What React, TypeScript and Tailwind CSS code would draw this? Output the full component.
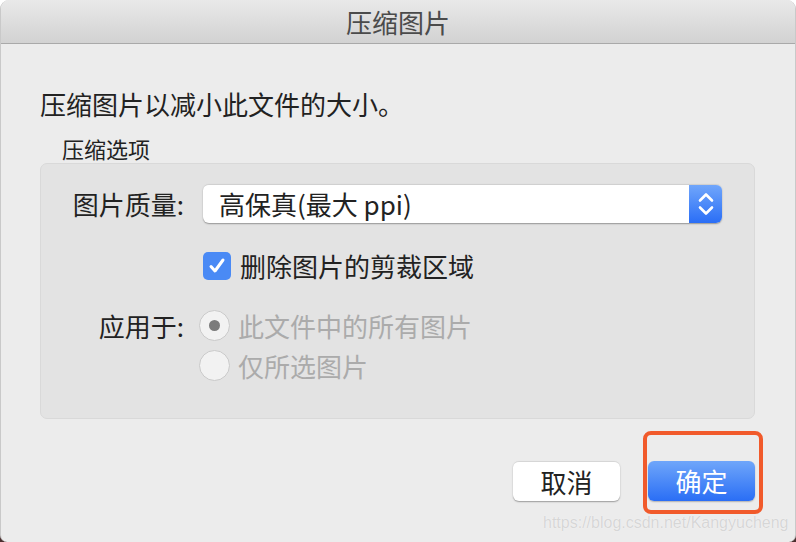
import React from 'react';

const font = "font-['Noto_Sans_CJK_SC','PingFang_SC',sans-serif]";

const Chevrons: React.FC = () => (
    <svg width="16" height="24" viewBox="0 0 16 24" fill="none" stroke="white" strokeWidth="2.6" strokeLinecap="round" strokeLinejoin="round">
        <path d="M2 8.5 L8 2.5 L14 8.5" />
        <path d="M2 15.5 L8 21.5 L14 15.5" />
    </svg>
);

const Radio: React.FC<{ checked?: boolean; label: string }> = ({ checked, label }) => (
    <div className="flex h-[31px] items-center">
        <div className="flex h-[31px] w-[31px] items-center justify-center rounded-full border border-[#cacaca] bg-[#f2f2f2]">
            {checked && <div className="h-[11px] w-[11px] rounded-full bg-[#7b7b7b]" />}
        </div>
        <span className="ml-[8px] text-[26px] leading-[31px] text-[#ababab]">{label}</span>
    </div>
);

const App: React.FC = () => {
    return (
        <div className={`relative h-[542px] w-[796px] overflow-hidden bg-[linear-gradient(to_bottom,#ffffff_50%,#4a2f2f_50%)] ${font}`}>
            <div className="flex h-full w-full flex-col overflow-hidden rounded-t-[9px] rounded-b-[7px] border-x border-[#c9c9c9] bg-[#ececec]">
                {/* title bar */}
                <div className="flex h-[44px] shrink-0 items-center justify-center border-b border-[#a9a9a9] bg-[linear-gradient(to_bottom,#e9e9e9,#d2d2d2)]">
                    <span className="text-[26px] leading-[30px] text-[#4b4b4b]">压缩图片</span>
                </div>

                <div className="flex flex-col pl-[39px] pr-[40px] pt-[42px]">
                    <p className="h-[36px] text-[26px] leading-[36px] text-[#222]">压缩图片以减小此文件的大小。</p>
                    <p className="ml-[22px] mt-[12px] h-[28px] text-[22px] leading-[28px] text-[#222]">压缩选项</p>

                    {/* options box */}
                    <div className="mt-[1px] flex h-[256px] flex-col rounded-[7px] border border-[#d9d9d9] bg-[#e3e3e3] pr-[32px] pt-[20px]">
                        <div className="grid grid-cols-[143px_1fr] items-center gap-x-[19px]">
                            <span className="text-right text-[26px] leading-[39px] text-[#222]">图片质量:</span>
                            <div className="flex h-[39px] overflow-hidden rounded-[6px] border-t border-[#d0d0d0] bg-white shadow-[0_1px_1.5px_rgba(0,0,0,0.35)]">
                                <span className="flex-1 pl-[16px] text-[26px] leading-[37px] text-[#222]">高保真(最大 ppi)</span>
                                <div className="flex w-[33px] items-center justify-center bg-[linear-gradient(to_bottom,#70a6fb,#2a6ef6)]">
                                    <Chevrons />
                                </div>
                            </div>

                            <div />
                            <div className="mt-[29px] flex h-[28px] items-center">
                                <div className="flex h-[28px] w-[28px] items-center justify-center rounded-[5px] bg-[#4a8af5]">
                                    <svg width="20" height="20" viewBox="0 0 20 20" fill="none" stroke="white" strokeWidth="3" strokeLinecap="round" strokeLinejoin="round">
                                        <path d="M4 10.5 L8 15 L16 4" />
                                    </svg>
                                </div>
                                <span className="ml-[9px] text-[26px] leading-[28px] text-[#222]">删除图片的剪裁区域</span>
                            </div>

                            <span className="mt-[30px] self-start text-right text-[26px] leading-[31px] text-[#222]">应用于:</span>
                            <div className="-ml-[4px] mt-[30px] flex flex-col gap-[9px]">
                                <Radio checked label="此文件中的所有图片" />
                                <Radio label="仅所选图片" />
                            </div>
                        </div>
                    </div>

                    {/* buttons */}
                    <div className="mt-[42px] flex justify-end gap-[28px]">
                        <button className="h-[40px] w-[107px] rounded-[6px] border-t border-[#d6d6d6] bg-white text-[26px] leading-[38px] text-[#222] shadow-[0_1px_1.5px_rgba(0,0,0,0.35)]">
                            取消
                        </button>
                        <div className="relative">
                            <button className="h-[40px] w-[107px] rounded-[6px] bg-[linear-gradient(to_bottom,#6fa6fa,#2a6ef5)] text-[26px] leading-[40px] text-white shadow-[0_1px_1.5px_rgba(0,0,0,0.25)]">
                                确定
                            </button>
                            {/* annotation highlight */}
                            <span className="absolute -left-[5px] -top-[30px] h-[83px] w-[120px] rounded-[8px] border-[4px] border-[#f15a2b]" />
                        </div>
                    </div>
                </div>
            </div>

            {/* watermark */}
            <span className="absolute left-[543px] top-[512px] font-['Liberation_Sans',sans-serif] text-[16px] leading-[22px] text-[#d6d6d6] [text-shadow:0_0_1px_#ffffff]">
                https://blog.csdn.net/Kangyucheng
            </span>
        </div>
    );
};

export default App;
